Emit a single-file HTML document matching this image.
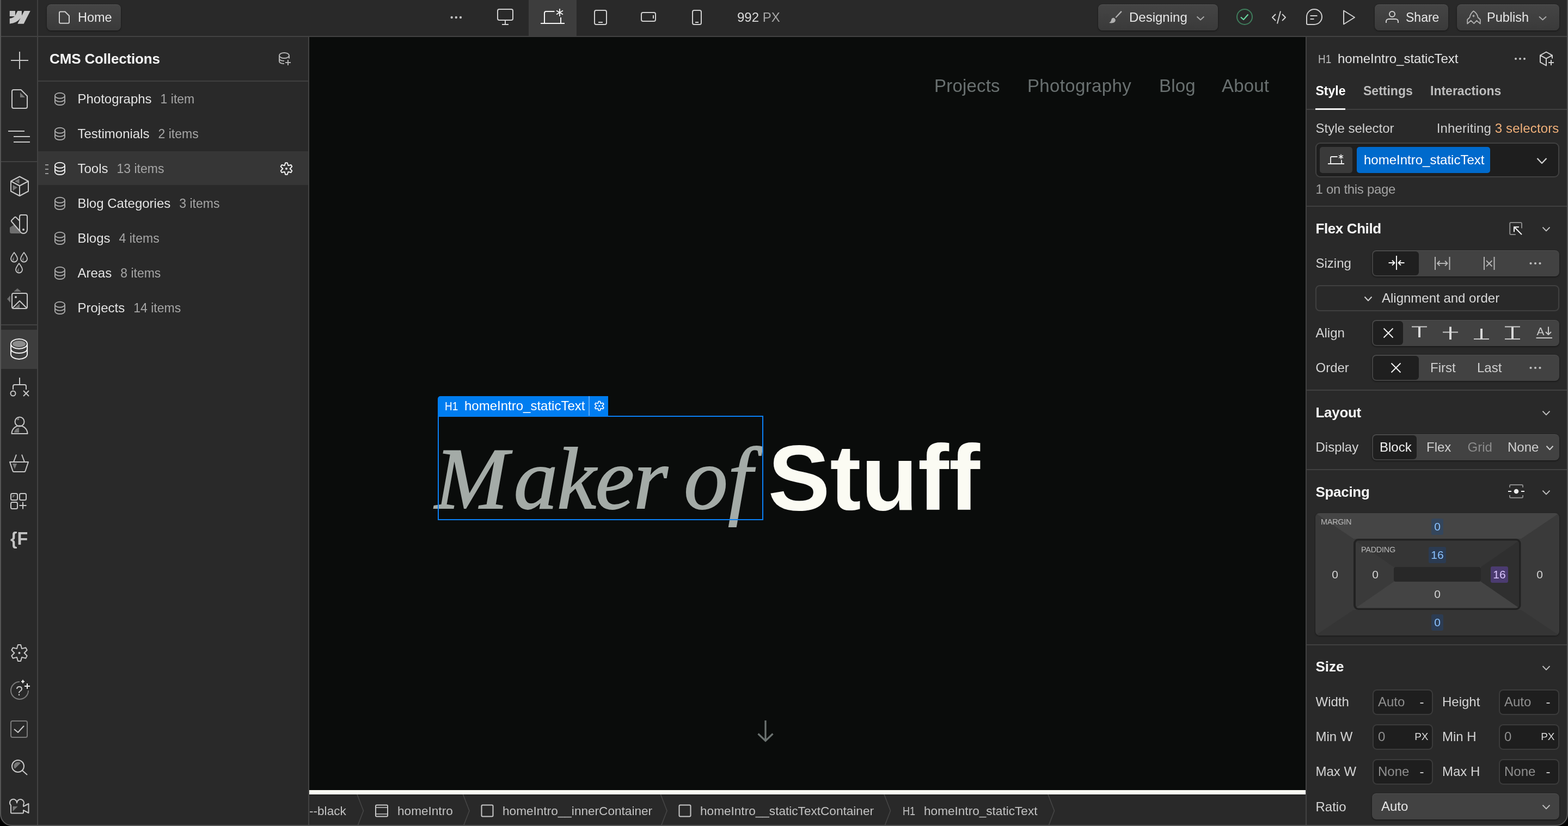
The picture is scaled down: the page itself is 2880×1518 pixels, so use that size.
<!DOCTYPE html>
<html lang="en">
<head>
<meta charset="utf-8">
<title>Webflow Designer - Home</title>
<style>
*{box-sizing:border-box;margin:0;padding:0}
html,body{width:2880px;height:1518px;overflow:hidden;background:#292929}
body{font-family:"Liberation Sans",Arial,sans-serif;font-size:24px;color:#d9d9d9;-webkit-font-smoothing:antialiased}
#app{position:relative;width:2880px;height:1518px;overflow:hidden;background:#292929;will-change:transform}
.abs{position:absolute}
svg{display:block;overflow:visible}
.ic{position:absolute;fill:none;stroke:#d0d0d0;stroke-width:2;stroke-linecap:butt;stroke-linejoin:round}
.t{position:absolute;white-space:nowrap;line-height:1}
/* ---------- top bar ---------- */
#topbar{position:absolute;left:0;top:0;width:2880px;height:68px;background:#292929;border-bottom:2px solid #424242}
.btn{position:absolute;top:8px;height:48px;background:linear-gradient(#454545,#3a3a3a);border-radius:8px;box-shadow:0 1px 3px rgba(0,0,0,.55),inset 0 1px 0 rgba(255,255,255,.07)}
/* ---------- rail ---------- */
#rail{position:absolute;left:0;top:68px;width:70px;height:1450px;background:#292929;border-right:2px solid #424242}
/* ---------- left panel ---------- */
#lp{position:absolute;left:70px;top:68px;width:498px;height:1450px;background:#292929;border-right:2px solid #424242}
.row{position:absolute;left:0;width:496px;height:64px}
.row .nm{position:absolute;left:72.5px;top:19px;font-size:24px;line-height:26px;color:#e3e3e3;white-space:nowrap}
.row .ct{color:#a6a6a6;margin-left:16px;font-size:23px}
/* ---------- canvas ---------- */
#cv{position:absolute;left:568px;top:68px;width:1830px;height:1392px;background:#0a0c0b;overflow:hidden}
#crumbs{position:absolute;left:568px;top:1460px;width:1830px;height:58px;background:#292929;overflow:hidden}
.mk{top:798.5px;font-family:"Liberation Serif",serif;font-style:italic;font-size:162px;line-height:162px;color:#a4aba7;-webkit-text-stroke:1.8px #a4aba7}
#mk::first-letter{letter-spacing:10px}
/* ---------- right panel ---------- */
#rp{position:absolute;left:2398px;top:68px;width:482px;height:1450px;background:#292929;border-left:2px solid #424242}
.hr{position:absolute;left:2px;width:480px;height:2px;background:#3b3b3b}
.lbl{position:absolute;left:18px;font-size:24px;line-height:26px;color:#d4d4d4;white-space:nowrap}
.h{position:absolute;left:18px;font-size:26px;line-height:28px;font-weight:700;color:#f5f5f5;white-space:nowrap}
.seg{position:absolute;left:122px;width:344px;height:48px;background:#424242;border-radius:8px;box-shadow:0 1px 3px rgba(0,0,0,.6),inset 0 1px 0 rgba(255,255,255,.08)}
.seg .on{position:absolute;left:2px;top:2px;height:44px;background:#1f1f1f;border-radius:6px}
.inp{position:absolute;width:112px;height:48px;background:#1e1e1e;border:2px solid #3b3b3b;border-radius:8px}
@media (max-width:1600px){html,body{width:1440px;height:759px}#app{zoom:.5}}
</style>
</head>
<body>
<div id="app">

<!--TOPBAR-S-->
<div id="topbar">
  <div id="tbdiv" class="abs" style="left:68px;top:0;width:2px;height:66px;background:#3f3f3f"></div>
  <!-- active breakpoint bg -->
  <div class="abs" style="left:971px;top:0;width:88px;height:66px;background:#3d3d3d"></div>
  <!-- buttons -->
  <div class="btn" style="left:86px;width:136px"></div>
  <div class="btn" style="left:2017px;width:220px"></div>
  <div class="btn" style="left:2525px;width:135px"></div>
  <div class="btn" style="left:2676px;width:188px"></div>
  <div class="t" style="left:143px;top:20px;font-size:23.5px;line-height:24px;color:#e6e6e6">Home</div>
  <div class="t" style="left:1354px;top:20px;font-size:24px;line-height:24px;color:#d9d9d9">992 <span style="color:#a8a8a8">PX</span></div>
  <div class="t" style="left:2074px;top:20px;font-size:24px;line-height:24px;color:#e6e6e6">Designing</div>
  <div class="t" style="left:2582px;top:20px;font-size:23px;line-height:24px;color:#e6e6e6">Share</div>
  <div class="t" style="left:2731px;top:20px;font-size:23.5px;line-height:24px;color:#e6e6e6">Publish</div>
  <svg class="abs" style="left:0;top:0" width="2880" height="66" viewBox="0 0 2880 66" fill="none" stroke="#d0d0d0" stroke-width="2" stroke-linejoin="round">
    <!-- webflow logo -->
    <path transform="translate(17.8,12.85) scale(1.58)" fill="#c8c8c8" stroke="none" d="m24 4.515-7.658 14.97H9.149l3.205-6.204h-.144C9.566 16.713 5.621 18.973 0 19.485v-6.118s3.596-.213 5.71-2.435H0V4.515h6.417v5.278l.144-.001 2.622-5.277h4.854v5.244h.144l2.72-5.244z"/>
    <!-- page icon in Home -->
    <path d="M109 23.5a2 2 0 0 1 2-2h8.5l7.5 7.5v11.8a2 2 0 0 1-2 2h-14a2 2 0 0 1-2-2z"/>
    <!-- dots -->
    <g fill="#c0c0c0" stroke="none"><circle cx="829.7" cy="32" r="2.2"/><circle cx="837.8" cy="32" r="2.2"/><circle cx="846" cy="32" r="2.2"/></g>
    <!-- desktop -->
    <rect x="914" y="17" width="28" height="20" rx="3"/><path d="M928 37v8M922 45h12"/>
    <!-- laptop active -->
    <g stroke="#f5f5f5"><path d="M993 43h44M1000 43V24a3 3 0 0 1 3-3h15.5M1030 32v11"/><path d="M1028 16v14M1022 19.5l12 7M1034 19.5l-12 7" stroke-width="1.8"/></g>
    <!-- tablet -->
    <rect x="1092" y="19" width="22" height="26" rx="3"/><path d="M1099 41h8"/>
    <!-- landscape phone -->
    <rect x="1178" y="23" width="26" height="16" rx="3"/><path d="M1200 28v6"/>
    <!-- phone -->
    <rect x="1272" y="19" width="16" height="26" rx="3"/><path d="M1277 41h6"/>
    <!-- brush -->
    <g stroke="none" fill="#b0b0b0"><path d="M2037 42c3-1.5 4-4 4.500-6.500c.8-2.800 4-3.500 6-1.500c2 2 1.800 5-.5 6.800c-2.500 1.800-6 1.900-10 1.200z"/><path d="M2048.500 31.500l10.500-11.500l1.800 1.800l-10.800 11.200z"/></g>
    <!-- chevrons -->
    <path d="M2198.500 30.500l6.500 6l6.500-6" stroke="#a8a8a8"/>
    <path d="M2827 30.500l6.500 6l6.500-6" stroke="#a8a8a8"/>
    <!-- check circle -->
    <circle cx="2286" cy="31" r="14" stroke="#3f7d5c"/><path d="M2279 31.500l5 4.500l8.500-9.500" stroke="#69d7a0" stroke-width="2.2"/>
    <!-- code -->
    <path d="M2343 26l-6 6l6 6M2355 26l6 6l-6 6M2352 20.500l-6 23"/>
    <!-- comment -->
    <path d="M2414 17a14 14 0 1 1 0 28h-12a2 2 0 0 1-2-2v-12a14 14 0 0 1 14-14z"/><path d="M2406.500 29h13M2406.500 35h7"/>
    <!-- play -->
    <path d="M2468 19.500v25l20-12.500z"/>
    <!-- person -->
    <circle cx="2557" cy="26" r="5"/><path d="M2546 42v-2.500a4.500 4.500 0 0 1 4.500-4.500h13a4.500 4.500 0 0 1 4.500 4.500v2.500"/>
    <!-- rocket -->
    <path d="M2706.500 20.300c-4.500 3.700-6.500 7.700-7 11.700l-4.300 4v7.600l6.600-5.800l5.500 5.400l5-5.400l6.500 5.800v-7.600l-4.300-4c-.5-4-2.500-8-8-11.700z" stroke="#b4b4b4" stroke-width="1.800"/><path d="M2706.500 26.500l1 2l2 .8l-2 .8l-1 2l-1-2l-2-.8l2-.8z" fill="#b4b4b4" stroke="none"/>
  </svg>
</div>
<!--TOPBAR-E-->
<!--RAIL-S-->
<div id="rail">
  <div class="abs" style="left:2px;top:228px;width:66px;height:2px;background:#424242"></div>
  <div class="abs" style="left:2px;top:528px;width:66px;height:2px;background:#424242"></div>
  <div class="abs" style="left:2px;top:538px;width:66px;height:72px;background:#3d3d3d"></div>
  <div class="t" style="left:18.5px;top:903px;font-size:34px;line-height:36px;font-weight:700;color:#c4c4c4;transform:scaleX(.95);transform-origin:0 0">{F</div>
  <svg class="abs" style="left:0;top:0" width="70" height="1450" viewBox="0 68 70 1450" fill="none" stroke="#c8c8c8" stroke-width="2" stroke-linejoin="round">
    <!-- add -->
    <path d="M20 111h32M36 95v32"/>
    <!-- pages -->
    <path d="M22 168a3 3 0 0 1 3-3h13.500l11.500 11.500v19.500a3 3 0 0 1-3 3h-22a3 3 0 0 1-3-3z"/>
    <path d="M37 170l9 9h-9z" fill="#777" stroke="none"/>
    <!-- navigator -->
    <path d="M15 241h30M25 251h30M25 261h30"/>
    <!-- cube -->
    <path d="M36 324.500l16 8.500v18.500l-16 8.500l-16-8.500v-18.500zM20 333l16 8.500l16-8.500M36 341.500v18.500"/>
    <path d="M27 333l8.500-4.500v9zM23.500 340l8.500 4.500l-8.500 6z" fill="#777" stroke="none"/>
    <!-- swatches -->
    <path d="M18 418l8-5l12 16h-17a3 3 0 0 1-3-3z" fill="#6e6e6e" stroke="none"/>
    <path d="M36 406l-6.500-6.500a2 2 0 0 0-2.800 0l-5.200 5.200a2 2 0 0 0 0 2.800l15 17.500"/>
    <path d="M36 398a3 3 0 0 1 3-3h8a3 3 0 0 1 3 3v24a7 7 0 0 1-14 0z"/>
    <circle cx="43" cy="422" r="2" fill="#c8c8c8" stroke="none"/>
    <!-- drops -->
    <g stroke-width="1.800"><path d="M26 464c3 4 6 8 6 11.500a6 6 0 0 1-12 0c0-3.500 3-7.500 6-11.500z"/><path d="M44 464c3 4 6 8 6 11.500a6 6 0 0 1-12 0c0-3.500 3-7.500 6-11.500z"/><path d="M35 484c3 4 6 8 6 11.500a6 6 0 0 1-12 0c0-3.500 3-7.500 6-11.500z"/></g>
    <g fill="#777" stroke="none"><path d="M25.500 472v7.500a3 3 0 0 1-2.500-3.500z"/><path d="M43.500 472v7.500a3 3 0 0 1-2.500-3.500z"/><path d="M34.500 492v7.500a3 3 0 0 1-2.500-3.500z"/></g>
    <!-- assets -->
    <path d="M25 536l7-6l7 6zM19 543v13l-6-6.500zM27 566l9-8v8z" fill="#6e6e6e" stroke="none"/>
    <rect x="22" y="539" width="28" height="28" rx="3"/><path d="M23 566l13-13l13 13"/><circle cx="29" cy="546" r="2" fill="#c8c8c8" stroke="none"/>
    <!-- cms (active) -->
    <g stroke="#f2f2f2"><ellipse cx="35" cy="632" rx="15" ry="9"/><path d="M20 632v19c0 5 6.700 9 15 9s15-4 15-9v-19M20 641c0 5 6.700 8 15 8s15-3 15-8"/></g>
    <ellipse cx="35" cy="632" rx="12" ry="6" fill="#8c8c8c" stroke="none"/>
    <!-- logic -->
    <path d="M36 694v13M24 716v-6a3 3 0 0 1 3-3h18a3 3 0 0 1 3 3v6M43 718l10 10M53 718l-10 10"/><circle cx="24" cy="723" r="4.500"/>
    <!-- users -->
    <circle cx="36" cy="775" r="8.500"/><path d="M21.500 797a14.500 14.500 0 0 1 29 0z"/>
    <path d="M35 768v4h-4a4 4 0 0 1 4-4zM35 786v9h-9a10 10 0 0 1 9-9z" fill="#777" stroke="none"/>
    <!-- ecommerce -->
    <path d="M30 835.500l-5 13.500M40 835.500l5 13.500M18 849h34l-5.500 16.500a2 2 0 0 1-2 1.500h-19a2 2 0 0 1-2-1.500z"/>
    <path d="M23 852h8l-4 10z" fill="#777" stroke="none"/>
    <!-- apps -->
    <rect x="20" y="907" width="12" height="12" rx="2.500"/><rect x="36" y="907" width="12" height="12" rx="2.500"/><rect x="20" y="923" width="12" height="12" rx="2.500"/><path d="M35.500 929h13M42 922.500v13"/>
    <path d="M23 910h5l-5 5z" fill="#777" stroke="none"/>
    <!-- settings -->
    <path d="M33.0 1185.0 L38.0 1185.0 L40.1 1192.1 L47.2 1190.3 L49.7 1194.7 L44.6 1200.0 L49.7 1205.3 L47.2 1209.7 L40.1 1207.9 L38.0 1215.0 L33.0 1215.0 L30.9 1207.9 L23.8 1209.7 L21.3 1205.3 L26.4 1200.0 L21.3 1194.7 L23.8 1190.3 L30.9 1192.1Z"/>
    <circle cx="35.500" cy="1200" r="2" fill="#c8c8c8" stroke="none"/>
    <!-- help -->
    <path d="M36 1253a16 16 0 1 0 16 16" stroke="#7a7a7a"/>
    <text x="35.500" y="1277.500" text-anchor="middle" font-family="Liberation Sans,sans-serif" font-size="23" fill="#c8c8c8" stroke="none">?</text>
    <path d="M42 1249.500v6M39 1252.500h6M50 1256v10M45 1261h10" stroke="#f0f0f0"/>
    <!-- audit -->
    <rect x="20" y="1325" width="30" height="30" rx="3" stroke="#7a7a7a"/><path d="M26 1340l7 6l11-12"/>
    <!-- search -->
    <circle cx="33" cy="1408" r="11"/><path d="M41 1416l9 8"/>
    <path d="M26 1411a7.500 7.500 0 0 1 7-10.500a7 7 0 0 1 5 1.500l-10.500 10.500a6 6 0 0 1-1.500-1.500z" fill="#777" stroke="none"/>
    <!-- video -->
    <path d="M20 1480a6.500 6.500 0 1 1 11-4.500a6.500 6.500 0 1 1 12 3.500v3l9.500-5v17l-9.500-5v4a1.500 1.500 0 0 1-1.500 1.500h-20a1.500 1.500 0 0 1-1.500-1.500z"/>
    <path d="M23.500 1482h9l-9 9z" fill="#777" stroke="none"/>
  </svg>
</div>
<!--RAIL-E-->
<!--LEFTPANEL-S-->
<div id="lp">
  <div class="abs" style="left:0;top:80px;width:496px;height:2px;background:#404040"></div>
  <div class="abs" style="left:0;top:210px;width:496px;height:62px;background:#363636"></div>
  <div class="t" style="left:21px;top:26px;font-size:26px;line-height:28px;font-weight:700;color:#f5f5f5;letter-spacing:-.15px">CMS Collections</div>
  <div class="row" style="top:82px"><div class="nm">Photographs<span class="ct">1 item</span></div></div>
  <div class="row" style="top:146px"><div class="nm">Testimonials<span class="ct">2 items</span></div></div>
  <div class="row" style="top:210px"><div class="nm">Tools<span class="ct">13 items</span></div></div>
  <div class="row" style="top:274px"><div class="nm">Blog Categories<span class="ct">3 items</span></div></div>
  <div class="row" style="top:338px"><div class="nm">Blogs<span class="ct">4 items</span></div></div>
  <div class="row" style="top:402px"><div class="nm">Areas<span class="ct">8 items</span></div></div>
  <div class="row" style="top:466px"><div class="nm">Projects<span class="ct">14 items</span></div></div>
  <svg class="abs" style="left:0;top:0" width="496" height="600" viewBox="70 68 496 600" fill="none" stroke="#a8a8a8" stroke-width="2" stroke-linejoin="round">
    <g stroke="#b4b4b4"><ellipse cx="522" cy="102" rx="9" ry="5"/><path d="M513 102v10.500c0 2.500 3.500 4.300 9 4.500M531 102v5.500M513 107.500c0 2.500 3.500 4.300 9 4.500M524 115h10M529 110v10"/></g>
    <g stroke="#a8a8a8" stroke-width="1.9"><ellipse cx="110" cy="175.8" rx="9" ry="5"/><path d="M101 175.8v12.200c0 2.800 4 5 9 5s9-2.200 9-5v-12.200M101 181.9c0 2.800 4 5 9 5s9-2.200 9-5"/></g>
    <g stroke="#a8a8a8" stroke-width="1.9"><ellipse cx="110" cy="239.8" rx="9" ry="5"/><path d="M101 239.8v12.200c0 2.800 4 5 9 5s9-2.200 9-5v-12.200M101 245.9c0 2.800 4 5 9 5s9-2.200 9-5"/></g>
    <g stroke="#f0f0f0" stroke-width="1.9"><ellipse cx="110" cy="303.8" rx="9" ry="5"/><path d="M101 303.8v12.200c0 2.800 4 5 9 5s9-2.200 9-5v-12.200M101 309.9c0 2.800 4 5 9 5s9-2.200 9-5"/></g>
    <g stroke="#a8a8a8" stroke-width="1.9"><ellipse cx="110" cy="367.8" rx="9" ry="5"/><path d="M101 367.8v12.200c0 2.800 4 5 9 5s9-2.200 9-5v-12.200M101 373.9c0 2.800 4 5 9 5s9-2.200 9-5"/></g>
    <g stroke="#a8a8a8" stroke-width="1.9"><ellipse cx="110" cy="431.8" rx="9" ry="5"/><path d="M101 431.8v12.200c0 2.800 4 5 9 5s9-2.200 9-5v-12.200M101 437.9c0 2.800 4 5 9 5s9-2.200 9-5"/></g>
    <g stroke="#a8a8a8" stroke-width="1.9"><ellipse cx="110" cy="495.8" rx="9" ry="5"/><path d="M101 495.8v12.200c0 2.800 4 5 9 5s9-2.200 9-5v-12.200M101 501.9c0 2.800 4 5 9 5s9-2.200 9-5"/></g>
    <g stroke="#a8a8a8" stroke-width="1.9"><ellipse cx="110" cy="559.8" rx="9" ry="5"/><path d="M101 559.8v12.200c0 2.800 4 5 9 5s9-2.200 9-5v-12.200M101 565.9c0 2.800 4 5 9 5s9-2.200 9-5"/></g>
    <path d="M83 303h6M83 311h6M83 319h6" stroke="#9a9a9a"/>
    <path d="M524.2 299.2 L527.8 299.2 L529.3 304.3 L534.5 303.0 L536.3 306.1 L532.6 310.0 L536.3 313.9 L534.5 317.0 L529.3 315.7 L527.8 320.8 L524.2 320.8 L522.7 315.7 L517.5 317.0 L515.7 313.9 L519.4 310.0 L515.7 306.1 L517.5 303.0 L522.7 304.3Z" stroke="#f2f2f2"/><circle cx="526" cy="310" r="2" fill="#f2f2f2" stroke="none"/>
  </svg>
</div>
<!--LEFTPANEL-E-->
<!--CANVAS-S-->
<div id="cv"><div class="abs" style="left:-568px;top:-68px;width:2880px;height:1518px">
  <div class="t" style="left:1716px;top:141px;font-size:33px;line-height:34px;color:#697070;letter-spacing:.2px">Projects</div>
  <div class="t" style="left:1887px;top:141px;font-size:33px;line-height:34px;color:#697070;letter-spacing:.35px">Photography</div>
  <div class="t" style="left:2129px;top:141px;font-size:33px;line-height:34px;color:#697070;letter-spacing:.2px">Blog</div>
  <div class="t" style="left:2244px;top:141px;font-size:33px;line-height:34px;color:#697070;letter-spacing:.2px">About</div>
  <!-- heading -->
  <div class="t mk" id="mk" style="left:798.5px;letter-spacing:-1.5px">Maker</div>
  <div class="t mk" id="mo" style="left:1256px">of</div>
  <div class="t" id="st" style="left:1410.5px;top:792.4px;font-size:171px;line-height:171px;font-weight:700;color:#fbfbf3">Stuff</div>
  <!-- selection -->
  <div class="abs" style="left:804px;top:764px;width:598px;height:192px;border:2px solid #0a80f5"></div>
  <div class="abs" style="left:804px;top:728px;width:313px;height:37px;background:#007df0;border-radius:5px 0 0 0"></div>
  <div class="abs" style="left:1081px;top:728px;width:2px;height:36px;background:#5aa9f6"></div>
  <div class="t" style="left:817px;top:733.5px;font-size:22.5px;line-height:26px;color:#fff;transform:scaleX(.84);transform-origin:0 50%">H1</div>
  <div class="t" style="left:853px;top:733px;font-size:24px;line-height:26px;color:#fff">homeIntro_staticText</div>
  <svg class="abs" style="left:0;top:0" width="2880" height="1518" viewBox="0 0 2880 1518" fill="none" stroke-linejoin="round">
    <path d="M1099.4 737.5 L1102.2 737.5 L1103.4 741.5 L1107.4 740.5 L1108.9 743.0 L1106.0 746.0 L1108.9 749.0 L1107.4 751.5 L1103.4 750.5 L1102.2 754.5 L1099.4 754.5 L1098.2 750.5 L1094.2 751.5 L1092.7 749.0 L1095.6 746.0 L1092.7 743.0 L1094.2 740.5 L1098.2 741.5Z" stroke="#fff" stroke-width="1.7"/><circle cx="1100.800" cy="746" r="1.600" fill="#fff"/>
    <path d="M1406 1324v37M1392.500 1348.500l13.500 13l13.500-13" stroke="#6c7371" stroke-width="3.200" stroke-linejoin="miter"/>
  </svg>
  <div class="abs" style="left:568px;top:1452px;width:1830px;height:8px;background:#fbfbf3"></div>
</div></div>
<!--CANVAS-E-->
<!--CRUMBS-S-->
<div id="crumbs"><div class="abs" style="left:-568px;top:-1460px;width:2880px;height:1518px;font-size:22.6px;color:#c2c2c2">
  <div id="crtop" class="abs" style="left:568px;top:1460px;width:1830px;height:2px;background:#232323"></div>
  <div class="t" style="left:568px;top:1478px;line-height:26px">--black</div>
  <div class="t" style="left:730px;top:1478px;line-height:26px">homeIntro</div>
  <div class="t" style="left:923px;top:1478px;line-height:26px">homeIntro__innerContainer</div>
  <div class="t" style="left:1286px;top:1478px;line-height:26px">homeIntro__staticTextContainer</div>
  <div class="t" style="left:1658px;top:1478px;line-height:26px;font-size:21.5px;transform:scaleX(.84);transform-origin:0 50%">H1</div>
  <div class="t" style="left:1697px;top:1478px;line-height:26px">homeIntro_staticText</div>
  <svg class="abs" style="left:0;top:0" width="2880" height="1518" viewBox="0 0 2880 1518" fill="none" stroke="#c8c8c8" stroke-width="2" stroke-linejoin="round">
    <g stroke="#474747" stroke-width="1.500" stroke-linejoin="miter">
      <path d="M656 1460l11.500 30l-11.500 30"/><path d="M850.500 1460l11.500 30l-11.500 30"/><path d="M1213.500 1460l11.500 30l-11.500 30"/><path d="M1624 1460l11.500 30l-11.500 30"/><path d="M1925 1460l11.500 30l-11.500 30"/>
    </g>
    <rect x="690" y="1479.500" width="22" height="21" rx="2"/><path d="M690 1484h22M690 1496h22" stroke-width="1.500"/>
    <rect x="884.500" y="1479.500" width="21" height="21" rx="2"/>
    <rect x="1247.500" y="1479.500" width="21" height="21" rx="2"/>
  </svg>
</div></div>
<!--CRUMBS-E-->
<!--RIGHTPANEL-S-->
<div id="rp"><div class="abs" style="left:-2400px;top:-68px;width:2880px;height:1518px">
  <div class="abs" style="left:2400px;top:200px;width:480px;height:2px;background:#404040"></div>
  <div class="abs" style="left:2400px;top:378px;width:480px;height:2px;background:#404040"></div>
  <div class="abs" style="left:2400px;top:716px;width:480px;height:2px;background:#404040"></div>
  <div class="abs" style="left:2400px;top:862px;width:480px;height:2px;background:#404040"></div>
  <div class="abs" style="left:2400px;top:1184px;width:480px;height:2px;background:#404040"></div>
  <div class="t" style="left:2421px;top:95.8px;font-size:22.5px;line-height:25px;color:#bdbdbd;transform:scaleX(.84);transform-origin:0 50%;">H1</div>
  <div class="t" style="left:2457px;top:94.3px;font-size:24px;line-height:27px;color:#e3e3e3;">homeIntro_staticText</div>
  <div class="t" style="left:2416.5px;top:154.1px;font-size:23px;line-height:26px;color:#fff;font-weight:700;">Style</div>
  <div class="t" style="left:2504px;top:154.1px;font-size:23px;line-height:26px;color:#bdbdbd;font-weight:700;">Settings</div>
  <div class="t" style="left:2627px;top:154.1px;font-size:23px;line-height:26px;color:#bdbdbd;font-weight:700;">Interactions</div>
  <div class="abs" style="left:2416px;top:199px;width:55px;height:3px;background:#f5f5f5"></div>
  <div class="t" style="left:2416.5px;top:221.7px;font-size:24px;line-height:27px;color:#d0d0d0;">Style selector</div>
  <div class="t" style="left:2863.5px;transform:translateX(-100%);top:221.7px;font-size:24px;line-height:27px;color:#d0d0d0;letter-spacing:.15px;">Inheriting <span style="color:#f0b07a">3 selectors</span></div>
  <div class="abs" style="left:2416px;top:262px;width:448px;height:64px;background:#1e1e1e;border:2px solid #414141;border-radius:9px"></div>
  <div class="abs" style="left:2424px;top:270px;width:60px;height:48px;background:#3a3a3a;border-radius:5px"></div>
  <div class="abs" style="left:2492px;top:270px;width:245px;height:48px;background:#006acc;border-radius:5px"></div>
  <div class="t" style="left:2505px;top:280.1px;font-size:24px;line-height:27px;color:#fff;">homeIntro_staticText</div>
  <div class="t" style="left:2416.5px;top:334.1px;font-size:24px;line-height:27px;color:#a3a3a3;letter-spacing:-.3px;">1 on this page</div>
  <div class="t" style="left:2416.5px;top:406.0px;font-size:26px;line-height:29px;color:#f5f5f5;font-weight:700;letter-spacing:-.4px;">Flex Child</div>
  <div class="t" style="left:2416.5px;top:470.4px;font-size:24px;line-height:27px;color:#d4d4d4;">Sizing</div>
  <div class="seg" style="left:2520px;top:460px"><div class="on" style="width:84px"></div></div>
  <div class="abs" style="left:2416px;top:524px;width:448px;height:48px;border:2px solid #404040;border-radius:8px"></div>
  <div class="t" style="left:2538px;top:533.7px;font-size:24px;line-height:27px;color:#d9d9d9;">Alignment and order</div>
  <div class="t" style="left:2416.5px;top:598.2px;font-size:24px;line-height:27px;color:#d4d4d4;">Align</div>
  <div class="seg" style="left:2520px;top:588px"><div class="on" style="width:55px"></div></div>
  <div class="t" style="left:2416.5px;top:662.2px;font-size:24px;line-height:27px;color:#d4d4d4;">Order</div>
  <div class="seg" style="left:2520px;top:652px"><div class="on" style="width:84px"></div></div>
  <div class="t" style="left:2627px;top:662.2px;font-size:24px;line-height:27px;color:#d0d0d0;">First</div>
  <div class="t" style="left:2713px;top:662.2px;font-size:24px;line-height:27px;color:#d0d0d0;">Last</div>
  <div class="t" style="left:2416.5px;top:744.1px;font-size:26px;line-height:29px;color:#f5f5f5;font-weight:700;letter-spacing:-.3px;">Layout</div>
  <div class="t" style="left:2416.5px;top:808.1px;font-size:24px;line-height:27px;color:#d4d4d4;">Display</div>
  <div class="seg" style="left:2520px;top:798px"><div class="on" style="width:80px"></div></div>
  <div class="t" style="left:2534px;top:808.1px;font-size:24px;line-height:27px;color:#f0f0f0;">Block</div>
  <div class="t" style="left:2620px;top:808.1px;font-size:24px;line-height:27px;color:#d0d0d0;">Flex</div>
  <div class="t" style="left:2695.5px;top:808.1px;font-size:24px;line-height:27px;color:#8c8c8c;">Grid</div>
  <div class="t" style="left:2769px;top:808.1px;font-size:24px;line-height:27px;color:#d0d0d0;">None</div>
  <div class="t" style="left:2416.5px;top:889.9px;font-size:26px;line-height:29px;color:#f5f5f5;font-weight:700;letter-spacing:-.3px;">Spacing</div>
  <div class="abs" style="left:2416px;top:943px;width:448px;height:225px;border-radius:8px;box-shadow:0 1px 3px rgba(0,0,0,.5)"></div>
  <svg class="abs" style="left:2416px;top:943px" width="448" height="225" viewBox="2416 943 448 225">
    <defs><clipPath id="cm"><rect x="2416" y="943" width="448" height="225" rx="8"/></clipPath><clipPath id="cp"><rect x="2489.500" y="993.500" width="300.500" height="124" rx="5"/></clipPath></defs>
    <g clip-path="url(#cm)">
      <rect x="2416" y="943" width="448" height="225" fill="#3a3a3a"/>
      <path d="M2416 943h448l-70 47h-308z" fill="#454545"/>
      <path d="M2416 1168h448l-70-47h-308z" fill="#353535"/>
    </g>
    <rect x="2488" y="992" width="303.500" height="127" rx="7" fill="#3a3a3a" stroke="#222" stroke-width="4"/>
    <g clip-path="url(#cp)">
      <path d="M2489 993h302l-71 49h-160z" fill="#353535"/>
      <path d="M2791 993v125l-71-49v-27z" fill="#2f2f2f"/>
      <path d="M2489 1118h302l-71-49h-160z" fill="#444"/>
    </g>
    <rect x="2560" y="1042" width="160" height="27" rx="4" fill="#282828"/>
    <rect x="2629" y="953" width="22" height="30" rx="3" fill="#34465c"/>
    <rect x="2624" y="1005" width="32" height="30" rx="3" fill="#2b3b52"/>
    <rect x="2738" y="1041" width="32" height="30" rx="3" fill="#4b3b70"/>
    <rect x="2629" y="1129" width="22" height="30" rx="3" fill="#2c3c53"/>
  </svg>
  <div class="t" style="left:2426px;top:950.5px;font-size:14.5px;line-height:16px;color:#b8b8b8;letter-spacing:-.3px;">MARGIN</div>
  <div class="t" style="left:2500px;top:1002.3px;font-size:14.5px;line-height:16px;color:#b8b8b8;letter-spacing:-.3px;">PADDING</div>
  <div class="t" style="left:2640px;transform:translateX(-50%);top:956.0px;font-size:21px;line-height:24px;color:#8ac2ff;">0</div>
  <div class="t" style="left:2640px;transform:translateX(-50%);top:1008.0px;font-size:21px;line-height:24px;color:#8ac2ff;">16</div>
  <div class="t" style="left:2754px;transform:translateX(-50%);top:1044.3px;font-size:21px;line-height:24px;color:#dcc6ff;">16</div>
  <div class="t" style="left:2640px;transform:translateX(-50%);top:1132.0px;font-size:21px;line-height:24px;color:#8ac2ff;">0</div>
  <div class="t" style="left:2452px;transform:translateX(-50%);top:1044.3px;font-size:21px;line-height:24px;color:#d4d4d4;">0</div>
  <div class="t" style="left:2526px;transform:translateX(-50%);top:1044.3px;font-size:21px;line-height:24px;color:#d4d4d4;">0</div>
  <div class="t" style="left:2828px;transform:translateX(-50%);top:1044.3px;font-size:21px;line-height:24px;color:#d4d4d4;">0</div>
  <div class="t" style="left:2640px;transform:translateX(-50%);top:1080.3px;font-size:21px;line-height:24px;color:#d4d4d4;">0</div>
  <div class="t" style="left:2416.5px;top:1211.3px;font-size:26px;line-height:29px;color:#f5f5f5;font-weight:700;">Size</div>
  <div class="t" style="left:2416.5px;top:1275.7px;font-size:24px;line-height:27px;color:#d4d4d4;">Width</div>
  <div class="t" style="left:2649px;top:1275.7px;font-size:24px;line-height:27px;color:#d4d4d4;">Height</div>
  <div class="inp" style="left:2520.5px;top:1266.5px;width:111px;height:47px"></div>
  <div class="t" style="left:2531.0px;top:1275.7px;font-size:24px;line-height:27px;color:#8f8f8f;">Auto</div>
  <div class="t" style="left:2615.5px;transform:translateX(-100%);top:1275.7px;font-size:24px;line-height:27px;color:#d0d0d0;">-</div>
  <div class="inp" style="left:2752.5px;top:1266.5px;width:111px;height:47px"></div>
  <div class="t" style="left:2763.0px;top:1275.7px;font-size:24px;line-height:27px;color:#8f8f8f;">Auto</div>
  <div class="t" style="left:2847.5px;transform:translateX(-100%);top:1275.7px;font-size:24px;line-height:27px;color:#d0d0d0;">-</div>
  <div class="t" style="left:2416.5px;top:1339.7px;font-size:24px;line-height:27px;color:#d4d4d4;">Min W</div>
  <div class="t" style="left:2649px;top:1339.7px;font-size:24px;line-height:27px;color:#d4d4d4;">Min H</div>
  <div class="inp" style="left:2520.5px;top:1330.5px;width:111px;height:47px"></div>
  <div class="t" style="left:2531.0px;top:1339.7px;font-size:24px;line-height:27px;color:#8f8f8f;">0</div>
  <div class="t" style="left:2623.5px;transform:translateX(-100%);top:1343.4px;font-size:19px;line-height:21px;color:#d9d9d9;">PX</div>
  <div class="inp" style="left:2752.5px;top:1330.5px;width:111px;height:47px"></div>
  <div class="t" style="left:2763.0px;top:1339.7px;font-size:24px;line-height:27px;color:#8f8f8f;">0</div>
  <div class="t" style="left:2855.5px;transform:translateX(-100%);top:1343.4px;font-size:19px;line-height:21px;color:#d9d9d9;">PX</div>
  <div class="t" style="left:2416.5px;top:1403.7px;font-size:24px;line-height:27px;color:#d4d4d4;">Max W</div>
  <div class="t" style="left:2649px;top:1403.7px;font-size:24px;line-height:27px;color:#d4d4d4;">Max H</div>
  <div class="inp" style="left:2520.5px;top:1394.5px;width:111px;height:47px"></div>
  <div class="t" style="left:2531.0px;top:1403.7px;font-size:24px;line-height:27px;color:#8f8f8f;">None</div>
  <div class="t" style="left:2615.5px;transform:translateX(-100%);top:1403.7px;font-size:24px;line-height:27px;color:#d0d0d0;">-</div>
  <div class="inp" style="left:2752.5px;top:1394.5px;width:111px;height:47px"></div>
  <div class="t" style="left:2763.0px;top:1403.7px;font-size:24px;line-height:27px;color:#8f8f8f;">None</div>
  <div class="t" style="left:2847.5px;transform:translateX(-100%);top:1403.7px;font-size:24px;line-height:27px;color:#d0d0d0;">-</div>
  <div class="t" style="left:2416.5px;top:1469.2px;font-size:24px;line-height:27px;color:#d4d4d4;">Ratio</div>
  <div class="seg" style="left:2520px;top:1458px"></div>
  <div class="t" style="left:2537px;top:1468.2px;font-size:24px;line-height:27px;color:#e6e6e6;">Auto</div>
  <svg class="abs" style="left:0;top:0" width="2880" height="1518" viewBox="0 0 2880 1518" fill="none" stroke="#c8c8c8" stroke-width="2" stroke-linejoin="round">
    <g fill="#c4c4c4" stroke="none"><circle cx="2784" cy="108" r="2"/><circle cx="2792" cy="108" r="2"/><circle cx="2800" cy="108" r="2"/></g>
    <path d="M2851 107.500v-5.800l-11-6.200l-11 6.200v12.600l11 6.200v-13M2829 101.700l11 6l11-6M2844 115h10M2849 110v10" stroke="#d0d0d0"/>
    <g stroke="#f0f0f0" stroke-width="1.800"><path d="M2439 301h30M2444 301v-11a2 2 0 0 1 2-2h10.500M2464 294v7"/><path d="M2463 283.500v9M2459.100 285.700l7.800 4.600M2466.900 285.700l-7.800 4.600" stroke-width="1.500"/></g>
    <path d="M2823.5 291.0l8.5 9.0l8.5 -9.0" stroke="#d0d0d0" stroke-width="2.4"/>
    <path d="M2795 419.500v-8.400a2 2 0 0 0-2-2h-17.800a2 2 0 0 0-2 2v17.800a2 2 0 0 0 2 2h8.600" stroke="#8a8a8a"/>
    <path d="M2795 431l-13.500-13.500M2790 417.200h-9v9" stroke="#f5f5f5" stroke-linejoin="miter"/>
    <path d="M2833.5 417.6l6.5 6.8l6.5 -6.8" stroke="#c0c0c0" stroke-width="2"/>
    <path d="M2565 470v26M2550.500 483h11M2557 478.500l4.500 4.500l-4.500 4.500M2579.500 483h-11M2573 478.500l-4.500 4.500l4.500 4.500" stroke="#f5f5f5"/>
    <g stroke="#b4b4b4"><path d="M2636 472v24M2662.500 472v24M2640 484h18.500M2644.500 479.500l-4.500 4.500l4.500 4.500M2654 479.500l4.500 4.500l-4.500 4.500"/>
    <path d="M2726 472v24M2744.500 472v24M2730 479l10.500 10.500M2740.500 479l-10.500 10.500"/></g>
    <g fill="#c0c0c0" stroke="none"><circle cx="2811.5" cy="484" r="2.1"/><circle cx="2820" cy="484" r="2.1"/><circle cx="2828.5" cy="484" r="2.1"/></g>
    <path d="M2506.5 545.5l6.5 7.0l6.5 -7.0" stroke="#d0d0d0" stroke-width="2"/>
    <path d="M2541.5 603.5l17.0 17.0M2558.5 603.5l-17.0 17.0" stroke="#f0f0f0"/>
    <g stroke="#c8c8c8"><path d="M2593 600.500h28"/><path d="M2607 601v19" stroke-width="4" stroke="#d8d8d8"/>
    <path d="M2650 610.500h28"/><path d="M2664 600.500v23.500" stroke-width="4" stroke="#d8d8d8"/>
    <path d="M2707 623h28"/><path d="M2721 604v19" stroke-width="4" stroke="#d8d8d8"/>
    <path d="M2764 600.500h28M2764 623h28"/><path d="M2778 601v22" stroke-width="4" stroke="#d8d8d8"/>
    <path d="M2821.500 621h29.500M2844 600.500v14M2839 610l5 5l5-5"/><text x="2829.500" y="615.600" text-anchor="middle" font-family="Liberation Sans,sans-serif" font-size="21" fill="#c8c8c8" stroke="none">A</text></g>
    <path d="M2555.5 667.5l17.0 17.0M2572.5 667.5l-17.0 17.0" stroke="#f0f0f0"/>
    <g fill="#c0c0c0" stroke="none"><circle cx="2811.5" cy="676" r="2.1"/><circle cx="2820" cy="676" r="2.1"/><circle cx="2828.5" cy="676" r="2.1"/></g>
    <path d="M2833.5 755.6l6.5 6.8l6.5 -6.8" stroke="#c0c0c0" stroke-width="2"/>
    <path d="M2840.5 819.8l6 6.4l6 -6.4" stroke="#d0d0d0" stroke-width="2"/>
    <path d="M2773 895.700v-2.600a2 2 0 0 1 2-2h20a2 2 0 0 1 2 2v2.600M2773 910v2.800a2 2 0 0 0 2 2h20a2 2 0 0 0 2-2v-2.800" stroke="#8a8a8a"/>
    <path d="M2770 903h6M2794 903h6" stroke="#f5f5f5"/><circle cx="2785" cy="903" r="4.300" fill="#ececec" stroke="none"/>
    <path d="M2833.5 901.6l6.5 6.8l6.5 -6.8" stroke="#c0c0c0" stroke-width="2"/>
    <path d="M2833.5 1224.1l6.5 6.8l6.5 -6.8" stroke="#c0c0c0" stroke-width="2"/>
    <path d="M2833.5 1479.6l6.5 6.8l6.5 -6.8" stroke="#c0c0c0" stroke-width="2"/>
  </svg>
</div></div>
<!--RIGHTPANEL-E-->
<!--FRAME-S-->
<div class="abs" style="left:0;top:-30px;width:2880px;height:1548px;border:2px solid #555;border-radius:0 0 22px 22px;box-shadow:0 0 0 40px #000;pointer-events:none;z-index:50"></div>
<!--FRAME-E-->

</div>
</body>
</html>
